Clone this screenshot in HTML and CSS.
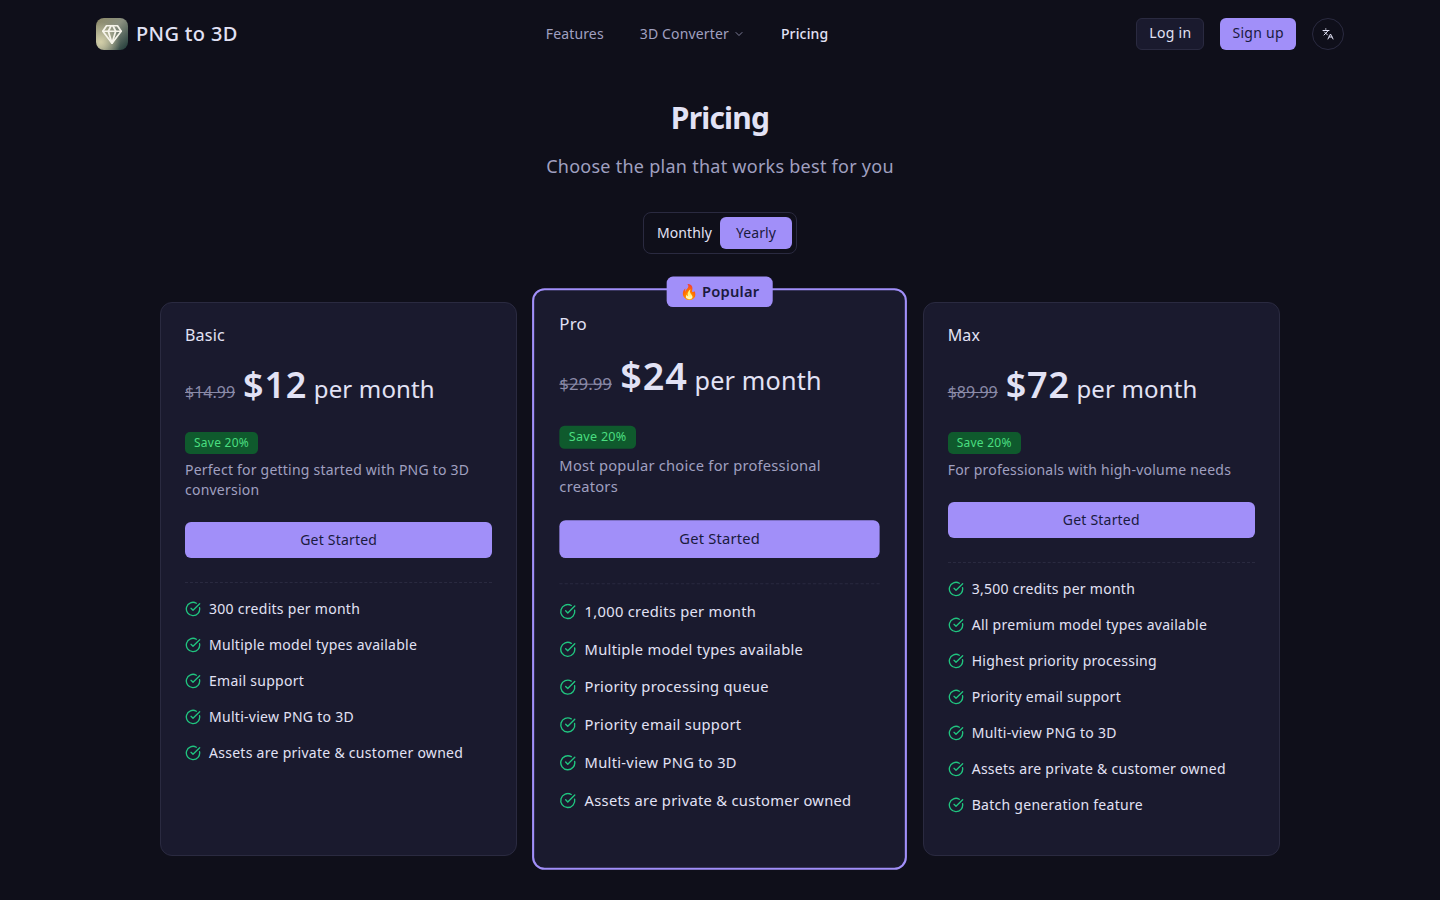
FILE: index.html
```html
<!DOCTYPE html>
<html lang="en">
<head>
<meta charset="utf-8">
<title>PNG to 3D - Pricing</title>
<link rel="stylesheet" href="styles.css">
</head>
<body>
<svg class="sprite" width="0" height="0" aria-hidden="true">
  <symbol id="check" viewBox="0 0 24 24"><path d="M21.801 10A10 10 0 1 1 17 3.335"/><path d="m9 11 3 3L22 4"/></symbol>
</svg>
<header class="topbar">
  <a class="brand" href="#">
    <span class="logo"><svg viewBox="0 0 24 24" class="logo-gem"><path d="M6 3h12l4 6-10 13L2 9Z"/><path d="M11 3 8 9l4 13 4-13-3-6"/><path d="M2 9h20"/></svg></span>
    <span class="brand-name">PNG to 3D</span>
  </a>
  <nav class="nav">
    <a href="#">Features</a>
    <a href="#" class="nav-drop">3D Converter <svg viewBox="0 0 24 24" class="chev"><path d="m6 9 6 6 6-6"/></svg></a>
    <a href="#" class="current">Pricing</a>
  </nav>
  <div class="actions">
    <button class="btn btn-ghost">Log in</button>
    <button class="btn btn-primary">Sign up</button>
    <button class="lang"><svg viewBox="0 0 24 24"><path d="m5 8 6 6"/><path d="m4 14 6-6 2-3"/><path d="M2 5h12"/><path d="M7 2h1"/><path d="m22 22-5-10-5 10"/><path d="M14 18h6"/></svg></button>
  </div>
</header>
<main class="page">
  <h1>Pricing</h1>
  <p class="sub">Choose the plan that works best for you</p>
  <div class="toggle">
    <span class="opt">Monthly</span>
    <span class="opt active">Yearly</span>
  </div>
  <section class="plans">
    <article class="card">
      <h2>Basic</h2>
      <div class="price"><s>$14.99</s><strong>$12</strong><span>per month</span></div>
      <span class="save">Save 20%</span>
      <p class="desc">Perfect for getting started with PNG to 3D conversion</p>
      <button class="cta">Get Started</button>
      <ul class="features">
        <li><svg class="tick"><use href="#check"/></svg>300 credits per month</li>
        <li><svg class="tick"><use href="#check"/></svg>Multiple model types available</li>
        <li><svg class="tick"><use href="#check"/></svg>Email support</li>
        <li><svg class="tick"><use href="#check"/></svg>Multi-view PNG to 3D</li>
        <li><svg class="tick"><use href="#check"/></svg>Assets are private &amp; customer owned</li>
      </ul>
    </article>
    <article class="card card-pro">
      <div class="popular">🔥 Popular</div>
      <h2>Pro</h2>
      <div class="price"><s>$29.99</s><strong>$24</strong><span>per month</span></div>
      <span class="save">Save 20%</span>
      <p class="desc">Most popular choice for professional creators</p>
      <button class="cta">Get Started</button>
      <ul class="features">
        <li><svg class="tick"><use href="#check"/></svg>1,000 credits per month</li>
        <li><svg class="tick"><use href="#check"/></svg>Multiple model types available</li>
        <li><svg class="tick"><use href="#check"/></svg>Priority processing queue</li>
        <li><svg class="tick"><use href="#check"/></svg>Priority email support</li>
        <li><svg class="tick"><use href="#check"/></svg>Multi-view PNG to 3D</li>
        <li><svg class="tick"><use href="#check"/></svg>Assets are private &amp; customer owned</li>
      </ul>
    </article>
    <article class="card">
      <h2>Max</h2>
      <div class="price"><s>$89.99</s><strong>$72</strong><span>per month</span></div>
      <span class="save">Save 20%</span>
      <p class="desc">For professionals with high-volume needs</p>
      <button class="cta">Get Started</button>
      <ul class="features">
        <li><svg class="tick"><use href="#check"/></svg>3,500 credits per month</li>
        <li><svg class="tick"><use href="#check"/></svg>All premium model types available</li>
        <li><svg class="tick"><use href="#check"/></svg>Highest priority processing</li>
        <li><svg class="tick"><use href="#check"/></svg>Priority email support</li>
        <li><svg class="tick"><use href="#check"/></svg>Multi-view PNG to 3D</li>
        <li><svg class="tick"><use href="#check"/></svg>Assets are private &amp; customer owned</li>
        <li><svg class="tick"><use href="#check"/></svg>Batch generation feature</li>
      </ul>
    </article>
  </section>
</main>
</body>
</html>
```
FILE: styles.css
```css
* { box-sizing: border-box; }
html, body { margin: 0; height: 900px; overflow: hidden; }
body {
  background: #0f0f1a;
  color: #e2e2f5;
  font-family: "Noto Sans", sans-serif;
  font-size: 14px;
}
a { color: inherit; text-decoration: none; }
button { font: inherit; cursor: pointer; }
.sprite { position: absolute; }

.topbar {
  width: 1248px;
  height: 68px;
  margin: 0 auto;
  display: flex;
  align-items: center;
  justify-content: space-between;
}
.brand { display: flex; align-items: center; gap: 8px; }
.logo {
  width: 32px; height: 32px;
  border-radius: 8px;
  background:
    radial-gradient(circle at 15% 75%, #d3cfa8 0, rgba(211, 207, 168, 0) 55%),
    linear-gradient(135deg, #8f8b68 0%, #8a9080 45%, #1b3635 100%);
  display: flex; align-items: center; justify-content: center;
}
.logo-gem { width: 22px; height: 22px; fill: none; stroke: #f6f4ea; stroke-width: 1.9; stroke-linejoin: round; stroke-linecap: round; }
.brand-name { font-size: 20px; line-height: 26px; font-weight: 500; letter-spacing: 0.35px; }
.nav { display: flex; gap: 36px; color: #a0a0c0; line-height: 18px; letter-spacing: 0.15px; }
.nav-drop { display: flex; align-items: center; gap: 4px; }
.chev { width: 12px; height: 12px; fill: none; stroke: currentColor; stroke-width: 1.5; stroke-linecap: round; stroke-linejoin: round; }
.current { color: #e2e2f5; font-weight: 500; }
.actions { display: flex; align-items: center; gap: 16px; }
.btn { height: 32px; border-radius: 6px; padding: 0 12px 2px; letter-spacing: 0.3px; line-height: 18px; }
.btn-ghost { background: #1a1a2e; color: #e2e2f5; border: 1px solid #2a2a40; }
.btn-primary { background: #a18ff9; color: #1a1a3e; border: 0; }
.lang {
  width: 32px; height: 32px; padding: 0;
  background: transparent; border: 1px solid #2a2a40; border-radius: 50%;
  display: flex; align-items: center; justify-content: center;
}
.lang svg { width: 12px; height: 12px; fill: none; stroke: #e2e2f5; stroke-width: 2; stroke-linecap: round; stroke-linejoin: round; }

.page { display: flex; flex-direction: column; align-items: center; padding-top: 32px; }
h1 { margin: 0; font-size: 30px; line-height: 36px; font-weight: 700; letter-spacing: -0.8px; }
.sub { margin: 16px 0 0; font-size: 18px; line-height: 28px; color: #a0a0c0; letter-spacing: 0.26px; }
.toggle {
  margin-top: 32px; height: 42px; width: 154px;
  border: 1px solid #2a2a40; border-radius: 8px;
  padding: 4px; display: flex; align-items: center; justify-content: flex-end; gap: 8px;
  letter-spacing: 0.12px;
}
.opt { height: 32px; line-height: 32px; }
.active { width: 72px; text-align: center; background: #a18ff9; color: #1a1a3e; border-radius: 6px; }

.plans {
  width: 1120px; margin-top: 48px;
  display: grid; grid-template-columns: repeat(3, 1fr); gap: 24px;
}
.card {
  position: relative;
  height: 554px;
  background: #1a1a2e;
  border: 1px solid #2a2a40;
  border-radius: 12px;
  padding: 24px;
  display: flex; flex-direction: column; align-items: flex-start;
}
.card-pro { transform: scale(1.05); border: 2px solid #a18ff9; z-index: 1; }
.popular {
  position: absolute; top: -13.5px; left: 50%; transform: translateX(-50%);
  height: 29px; line-height: 28px; padding: 0 13px; white-space: nowrap;
  background: #a18ff9; color: #1a1a3e; border-radius: 6px; font-weight: 600; letter-spacing: 0.2px;
}
h2 { margin: 0; font-size: 16px; line-height: 16px; font-weight: 400; letter-spacing: 0.2px; }
.price { display: flex; align-items: baseline; gap: 8px; margin-top: 22px; height: 40px; line-height: 40px; }
.price s { font-size: 16px; color: #8a8aa8; }
.price strong { font-size: 36px; font-weight: 600; letter-spacing: 0.8px; }
.price span { font-size: 24px; letter-spacing: 0.15px; margin-left: -1.5px; }
.save {
  margin-top: 27px; height: 22px; line-height: 22px; padding: 0 9px;
  background: #0f5a2d; color: #4ade80; border-radius: 5px; font-size: 12px; letter-spacing: 0.25px;
}
.desc { margin: 6px 0 0; line-height: 20px; color: #a0a0c0; letter-spacing: 0.22px; }
.cta {
  margin-top: 22px; width: 100%; height: 36px; letter-spacing: 0.2px; padding: 0 0 2px;
  background: #a18ff9; color: #1a1a3e; border: 0; border-radius: 6px;
}
.features {
  list-style: none; margin: 24px 0 0; padding: 16px 0 0; width: 100%;
  border-top: 1px dashed #2a2a40;
  display: flex; flex-direction: column; gap: 16px;
}
.features li { display: flex; align-items: center; gap: 8px; line-height: 20px; letter-spacing: 0.28px; }
.tick { width: 16px; height: 16px; fill: none; stroke: #20c47f; stroke-width: 2; stroke-linecap: round; stroke-linejoin: round; flex: none; }
```
